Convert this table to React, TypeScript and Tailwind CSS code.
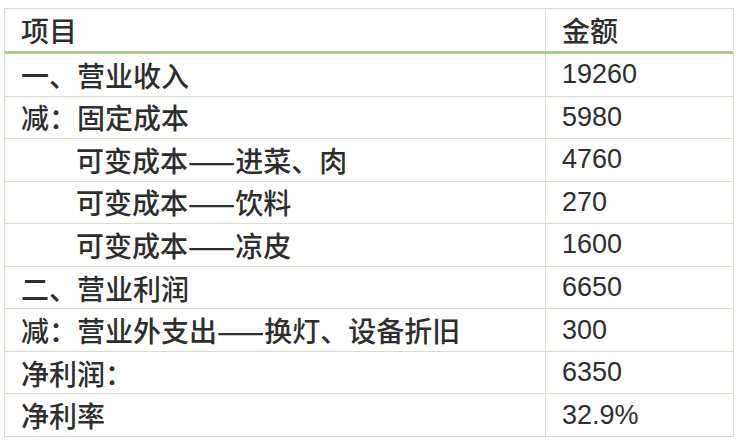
import React from 'react';

const rows: { label: string; value: string; indent?: boolean }[] = [
  { label: '一、营业收入', value: '19260' },
  { label: '减：固定成本', value: '5980' },
  { label: '可变成本——进菜、肉', value: '4760', indent: true },
  { label: '可变成本——饮料', value: '270', indent: true },
  { label: '可变成本——凉皮', value: '1600', indent: true },
  { label: '二、营业利润', value: '6650' },
  { label: '减：营业外支出——换灯、设备折旧', value: '300' },
  { label: '净利润：', value: '6350' },
  { label: '净利率', value: '32.9%' },
];

const latin = { fontFamily: '"Liberation Sans", Arial, sans-serif' };
const cjk = { fontFamily: '"Noto Sans CJK SC", sans-serif' };

export default function App() {
  return (
    <div className="w-[745px] h-[444px] bg-white pt-[8px] pl-[4px] text-[#2e2e2e]">
      <div className="w-[730px] border-l border-r border-t border-[#d5e2c9]">
        <div className="flex h-[45px] border-b-[3px] border-[#a6cf8c]">
          <div className="w-[541px] border-r border-[#d5e2c9] pl-[16px] flex items-center text-[28px] font-medium leading-none" style={cjk}>
            项目
          </div>
          <div className="flex-1 pl-[16px] flex items-center text-[28px] font-medium leading-none" style={cjk}>
            金额
          </div>
        </div>
        {rows.map((r, i) => (
          <div key={i} className="flex h-[42.55px] border-b border-[#d5e2c9]">
            <div
              className={`w-[541px] border-r border-[#d5e2c9] flex items-center text-[28px] font-medium leading-none ${
                r.indent ? 'pl-[71px]' : 'pl-[16px]'
              }`}
              style={cjk}
            >
              {r.label}
            </div>
            <div className="flex-1 pl-[16px] flex items-center text-[27px] leading-none" style={latin}>
              {r.value}
            </div>
          </div>
        ))}
      </div>
    </div>
  );
}
